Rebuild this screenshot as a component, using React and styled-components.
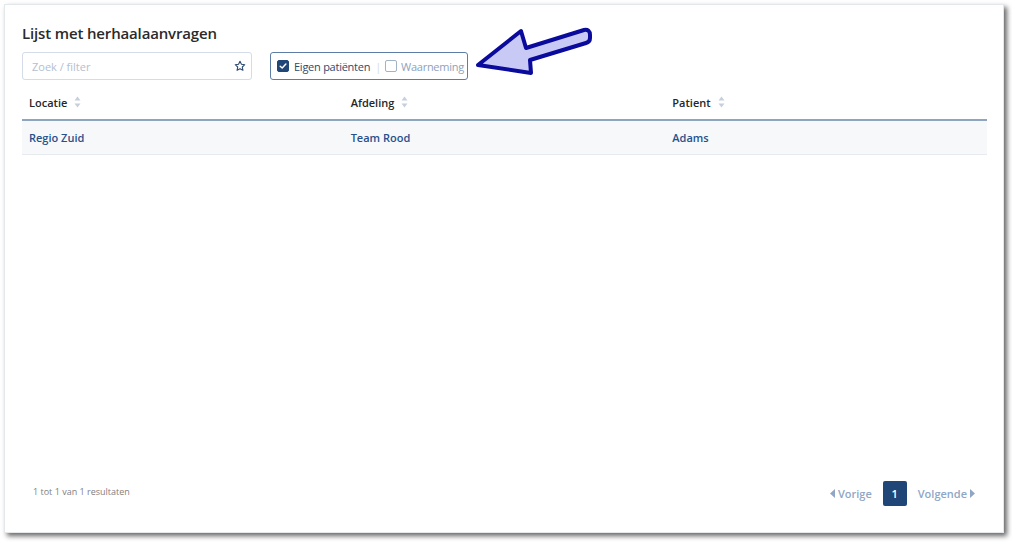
import React from "react";
import styled, { createGlobalStyle } from "styled-components";

const Global = createGlobalStyle`
  html, body { margin: 0; padding: 0; background: #ffffff; }
  body { font-family: "Open Sans", "Noto Sans", Arial, sans-serif; }
  * { box-sizing: border-box; }
`;

const Stage = styled.div`
  width: 1012px;
  height: 542px;
  padding: 4px 8px 9px 4px;
`;

const Panel = styled.div`
  position: relative;
  width: 1000px;
  height: 529px;
  background: #fff;
  border: 1px solid #e4e8ea;
  box-shadow: 3px 3px 5px rgba(0, 0, 0, 0.6);
  display: flex;
  flex-direction: column;
  padding: 18px 16px 0 17px;
`;

const Title = styled.h1`
  margin: 0;
  font-size: 15px;
  line-height: 20px;
  font-weight: 600;
  letter-spacing: -0.15px;
  color: #2a2a2a;
`;

const Controls = styled.div`
  display: flex;
  gap: 18px;
  margin-top: 9px;
`;

const Search = styled.div`
  width: 230px;
  height: 28px;
  border: 1px solid #d3dce7;
  border-radius: 3px;
  display: flex;
  align-items: center;
  justify-content: space-between;
  padding: 0 5px 0 9px;
  font-size: 11px;
  color: #b4c0cf;
`;

const Toggle = styled.div`
  width: 198px;
  height: 28px;
  border: 1px solid #5d7da6;
  border-radius: 3px;
  display: flex;
  align-items: center;
  padding: 0 6px;
  font-size: 11px;
  letter-spacing: -0.25px;
  white-space: nowrap;
`;

const Check = styled.span`
  flex-shrink: 0;
  width: 12px;
  height: 12px;
  border-radius: 2px;
  display: inline-flex;
  align-items: center;
  justify-content: center;
  background: ${(p) => (p.$on ? "#1f4677" : "#fff")};
  border: 1px solid ${(p) => (p.$on ? "#1f4677" : "#a3b3c6")};
  margin-right: ${(p) => (p.$on ? "5px" : "4px")};
`;

const Label = styled.span`
  color: ${(p) => (p.$on ? "#2c4a6f" : "#8ea2bc")};
`;

const Sep = styled.span`
  color: #d5dce5;
  margin: 0 4px 0 5px;
  font-size: 11px;
`;

const Table = styled.div`
  margin-top: 7px;
  display: flex;
  flex-direction: column;
`;

const Row = styled.div`
  display: grid;
  grid-template-columns: 1fr 1fr 1fr;
  height: 34px;
  background: ${(p) => (p.$head ? "#fff" : "#f6f8fa")};
  border-bottom: ${(p) => (p.$head ? "2px solid #8ea4bf" : "1px solid #e7ebf0")};
`;

const Cell = styled.div`
  display: flex;
  align-items: center;
  padding-left: 7px;
  padding-bottom: ${(p) => (p.$head ? "2px" : "0")};
  font-size: 11px;
  font-weight: 600;
  color: ${(p) => (p.$head ? "#262626" : "#27508a")};
`;

const SortIcon = styled.svg`
  margin-left: 7px;
`;

const Footer = styled.div`
  margin-top: auto;
  display: flex;
  align-items: center;
  justify-content: space-between;
  padding: 0 12px 26px 11px;
`;

const Count = styled.span`
  font-size: 9px;
  color: #808080;
  margin-top: -4px;
`;

const Pager = styled.div`
  display: flex;
  align-items: center;
  gap: 11px;
  font-size: 11px;
  font-weight: 600;
  color: #8fa6c6;
`;

const PageLink = styled.span`
  display: inline-flex;
  align-items: center;
  gap: 3px;
`;

const PageNum = styled.span`
  width: 24px;
  height: 25px;
  border-radius: 2px;
  background: #1f4677;
  color: #fff;
  display: inline-flex;
  align-items: center;
  justify-content: center;
  font-size: 11px;
`;

const Arrow = styled.svg`
  position: absolute;
  left: 463px;
  top: 15px;
  overflow: visible;
`;

const Sort = () => (
  <SortIcon width="7" height="12" viewBox="0 0 7 12">
    <path d="M3.5 0.5 L6.5 4.5 H0.5 Z" fill="#c6d0dc" />
    <path d="M3.5 11.5 L6.5 7.5 H0.5 Z" fill="#c6d0dc" />
  </SortIcon>
);

export default function App() {
  return (
    <>
      <Global />
      <Stage>
        <Panel>
          <Title>Lijst met herhaalaanvragen</Title>
          <Controls>
            <Search>
              <span>Zoek / filter</span>
              <svg width="12" height="12" viewBox="0 0 24 24" fill="none" stroke="#2c4a6f" strokeWidth="2.2" strokeLinejoin="round">
                <path d="M12 2.5l2.9 6.1 6.6.8-4.9 4.6 1.3 6.6L12 17.3l-5.9 3.3 1.3-6.6-4.9-4.6 6.6-.8z" />
              </svg>
            </Search>
            <Toggle>
              <Check $on>
                <svg width="8" height="8" viewBox="0 0 10 10">
                  <path d="M1.5 5.2 L4 7.6 L8.6 2.6" fill="none" stroke="#fff" strokeWidth="1.8" strokeLinecap="round" strokeLinejoin="round" />
                </svg>
              </Check>
              <Label $on>Eigen patiënten</Label>
              <Sep>|</Sep>
              <Check />
              <Label>Waarneming</Label>
            </Toggle>
          </Controls>
          <Table>
            <Row $head>
              <Cell $head>Locatie<Sort /></Cell>
              <Cell $head>Afdeling<Sort /></Cell>
              <Cell $head>Patient<Sort /></Cell>
            </Row>
            <Row>
              <Cell>Regio Zuid</Cell>
              <Cell>Team Rood</Cell>
              <Cell>Adams</Cell>
            </Row>
          </Table>
          <Footer>
            <Count>1 tot 1 van 1 resultaten</Count>
            <Pager>
              <PageLink>
                <svg width="5" height="9" viewBox="0 0 5 9"><path d="M5 0 V9 L0 4.5 Z" fill="#8fa6c6" /></svg>
                Vorige
              </PageLink>
              <PageNum>1</PageNum>
              <PageLink>
                Volgende
                <svg width="5" height="9" viewBox="0 0 5 9"><path d="M0 0 V9 L5 4.5 Z" fill="#8fa6c6" /></svg>
              </PageLink>
            </Pager>
          </Footer>
          <Arrow width="132" height="64" viewBox="467 19 132 64">
            <path
              d="M477 64 L520 30 L525 47 L583 29 Q589 28 589 34 L589 37 Q589 41 585 42 L529 59 L530 72 Z"
              fill="#c9c9f5"
              stroke="#0a0a9c"
              strokeWidth="4"
              strokeLinejoin="round"
            />
          </Arrow>
        </Panel>
      </Stage>
    </>
  );
}
